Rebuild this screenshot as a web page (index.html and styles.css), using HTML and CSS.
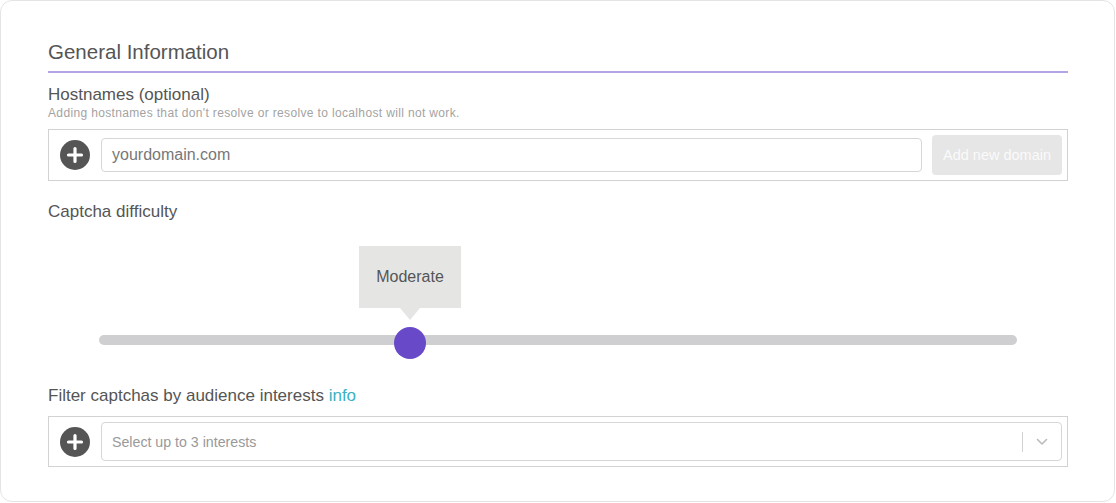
FILE: index.html
```html
<!DOCTYPE html>
<html lang="en">
<head>
<meta charset="utf-8">
<title>General Information</title>
<link rel="stylesheet" href="styles.css">
</head>
<body>
<div class="card">
  <h2 class="section-title">General Information</h2>

  <div class="field">
    <div class="label">Hostnames (optional)</div>
    <div class="hint">Adding hostnames that don't resolve or resolve to localhost will not work.</div>
    <div class="group">
      <span class="plus"><svg width="30" height="30" viewBox="0 0 30 30"><circle cx="15" cy="15" r="15" fill="#555"/><path d="M15 8.5v13M8.5 15h13" stroke="#fff" stroke-width="3.2" stroke-linecap="round"/></svg></span>
      <div class="input">yourdomain.com</div>
      <button class="btn" type="button">Add new domain</button>
    </div>
  </div>

  <div class="label label-captcha">Captcha difficulty</div>
  <div class="slider">
    <div class="track"></div>
    <div class="tip">Moderate</div>
    <div class="thumb"></div>
  </div>

  <div class="label label-filter">Filter captchas by audience interests <a class="info">info</a></div>
  <div class="group group-select">
    <span class="plus"><svg width="30" height="30" viewBox="0 0 30 30"><circle cx="15" cy="15" r="15" fill="#555"/><path d="M15 8.5v13M8.5 15h13" stroke="#fff" stroke-width="3.2" stroke-linecap="round"/></svg></span>
    <div class="select">
      <span class="placeholder">Select up to 3 interests</span>
      <span class="sep"></span>
      <span class="chev"><svg width="12" height="8" viewBox="0 0 12 8"><path d="M1.5 1.5l4.5 4.5 4.5-4.5" fill="none" stroke="#bbb" stroke-width="1.6" stroke-linecap="round" stroke-linejoin="round"/></svg></span>
    </div>
  </div>
</div>
</body>
</html>
```

FILE: styles.css
```css
* { box-sizing: border-box; }
html, body { margin: 0; padding: 0; background: #fff; }
body { font-family: "Liberation Sans", Arial, sans-serif; color: #555; }

.card {
  width: 1115px;
  height: 502px;
  border: 1px solid #e4e4e4;
  border-radius: 12px;
  padding: 39px 46px 0 47px;
  background: #fff;
}

.section-title {
  margin: 0;
  font-size: 20.5px;
  font-weight: normal;
  line-height: 24px;
  color: #555;
  padding-bottom: 7px;
  border-bottom: 2px solid #b3a5e5;
}

.field { margin-top: 13px; }

.label {
  font-size: 17px;
  line-height: 18px;
  color: #555;
}

.hint {
  margin-top: 3px;
  font-size: 12px;
  line-height: 13px;
  letter-spacing: 0.35px;
  color: #a3a3a3;
}

.group {
  margin-top: 9px;
  height: 52px;
  border: 1px solid #d2d2d2;
  display: flex;
  align-items: center;
  padding: 0 5px 0 11px;
  gap: 11px;
}

.plus { display: flex; width: 30px; height: 30px; flex: none; }

.input {
  flex: 1;
  height: 34px;
  border: 1px solid #d6d6d6;
  border-radius: 4px;
  padding-left: 10px;
  font-size: 16px;
  line-height: 32px;
  color: #777;
}

.btn {
  margin-left: -1px;
  width: 130px;
  height: 40px;
  border: 0;
  border-radius: 4px;
  background: #e6e6e6;
  color: #fafafa;
  font-family: "Liberation Sans", Arial, sans-serif;
  font-size: 14.5px;
  padding: 0;
}

.label-captcha { margin-top: 22px; }

.slider {
  position: relative;
  margin-top: 25px;
  height: 112px;
  padding: 89px 51px 0;
}

.track {
  height: 10px;
  border-radius: 5px;
  background: #cfcfd1;
}

.tip {
  position: absolute;
  left: 311px;
  top: 0;
  width: 102px;
  height: 62px;
  background: #e5e6e4;
  color: #555;
  font-size: 16px;
  line-height: 62px;
  text-align: center;
}
.tip::after {
  content: "";
  position: absolute;
  left: 41px;
  top: 62px;
  border-top: 12px solid #e5e6e4;
  border-left: 10px solid transparent;
  border-right: 10px solid transparent;
}

.thumb {
  position: absolute;
  left: 346px;
  top: 81px;
  width: 32px;
  height: 32px;
  border-radius: 50%;
  background: #6849c8;
}

.label-filter { margin-top: 29px; }

.info { color: #3bb1c4; text-decoration: none; }

.group-select { margin-top: 11px; height: 51px; }

.select {
  flex: 1;
  height: 39px;
  border: 1px solid #d6d6d6;
  border-radius: 4px;
  display: flex;
  align-items: center;
  padding-left: 10px;
}

.placeholder {
  flex: 1;
  font-size: 14.2px;
  color: #999;
}

.sep {
  width: 1px;
  height: 20px;
  background: #d2d2d2;
}

.chev {
  display: flex;
  width: 38px;
  justify-content: center;
}
```
